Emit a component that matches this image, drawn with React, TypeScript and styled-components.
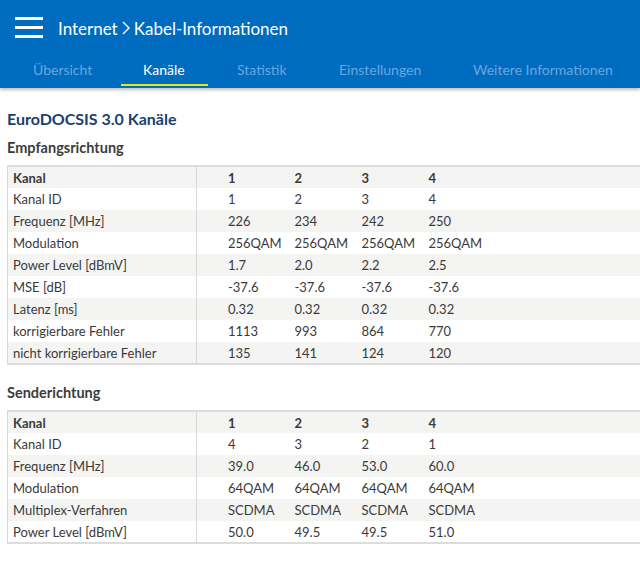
import React from "react";
import styled, { createGlobalStyle } from "styled-components";

const GlobalStyle = createGlobalStyle`
  html, body {
    margin: 0;
    padding: 0;
    background: #ffffff;
    overflow-x: hidden;
  }
  body {
    font-family: Lato, "Noto Sans", sans-serif;
    color: #333333;
  }
`;

const Header = styled.header`
  background-color: #006cc0;
  box-shadow: 0 2px 3px rgba(0, 0, 0, 0.25);
`;

const TopBar = styled.div`
  height: 56px;
  display: flex;
  align-items: center;
  padding-left: 15px;
  gap: 15px;
`;

const Burger = styled.div`
  width: 28px;
  display: flex;
  flex-direction: column;
  gap: 6px;
  margin-top: -2px;

  span {
    display: block;
    height: 3px;
    background: #ffffff;
  }
`;

const Title = styled.h1`
  margin: 0;
  font-size: 17px;
  font-weight: 400;
  color: #ffffff;
  display: flex;
  align-items: center;
  gap: 3px;
`;

const Tabs = styled.nav`
  height: 32px;
  display: flex;
  padding-left: 33px;
`;

const Tab = styled.div<{ $active?: boolean; $width: number }>`
  width: ${(p) => p.$width}px;
  font-size: 14px;
  color: ${(p) => (p.$active ? "#ffffff" : "#6aa6df")};
  line-height: 28px;
  position: relative;

  &::after {
    content: "";
    display: ${(p) => (p.$active ? "block" : "none")};
    position: absolute;
    left: -22px;
    width: 87px;
    bottom: 2px;
    height: 2px;
    background: #e6e61a;
  }
`;

const Main = styled.main`
  padding: 21px 0 30px 7px;
`;

const PageTitle = styled.h2`
  margin: 0 0 11px 0;
  font-size: 16px;
  font-weight: 700;
  color: #1b3f6e;
`;

const SectionTitle = styled.h3<{ $top?: number }>`
  margin: ${(p) => p.$top ?? 0}px 0 9px 0;
  font-size: 14.5px;
  font-weight: 700;
  color: #3c3c3c;
`;

const Table = styled.table`
  border-collapse: collapse;
  table-layout: fixed;
  width: 660px;
  border-top: 2px solid #dcdcdc;
  border-bottom: 2px solid #dcdcdc;
  border-left: 1px solid #d8d8d8;
  font-size: 13px;
  color: #3a3a3a;
`;

const Col = styled.col<{ $width?: number }>`
  width: ${(p) => (p.$width ? `${p.$width}px` : "auto")};
`;

const Row = styled.tr<{ $shade: boolean; $head?: boolean }>`
  background: ${(p) => (p.$shade ? "#f4f4f3" : "#ffffff")};
  font-weight: ${(p) => (p.$head ? 700 : 400)};
  height: 22px;
`;

const LabelCell = styled.td`
  padding: 0 0 0 5px;
  border-right: 1px solid #d8d8d8;
  white-space: nowrap;
`;

const ValueCell = styled.td<{ $first?: boolean }>`
  padding: 0 0 0 ${(p) => (p.$first ? 31 : 0)}px;
  white-space: nowrap;
`;

const FillCell = styled.td``;

type Line = [string, ...string[]];

const downstream: Line[] = [
  ["Kanal", "1", "2", "3", "4"],
  ["Kanal ID", "1", "2", "3", "4"],
  ["Frequenz [MHz]", "226", "234", "242", "250"],
  ["Modulation", "256QAM", "256QAM", "256QAM", "256QAM"],
  ["Power Level [dBmV]", "1.7", "2.0", "2.2", "2.5"],
  ["MSE [dB]", "-37.6", "-37.6", "-37.6", "-37.6"],
  ["Latenz [ms]", "0.32", "0.32", "0.32", "0.32"],
  ["korrigierbare Fehler", "1113", "993", "864", "770"],
  ["nicht korrigierbare Fehler", "135", "141", "124", "120"],
];

const upstream: Line[] = [
  ["Kanal", "1", "2", "3", "4"],
  ["Kanal ID", "4", "3", "2", "1"],
  ["Frequenz [MHz]", "39.0", "46.0", "53.0", "60.0"],
  ["Modulation", "64QAM", "64QAM", "64QAM", "64QAM"],
  ["Multiplex-Verfahren", "SCDMA", "SCDMA", "SCDMA", "SCDMA"],
  ["Power Level [dBmV]", "50.0", "49.5", "49.5", "51.0"],
];

const ChannelTable = ({ rows }: { rows: Line[] }) => (
  <Table>
    <colgroup>
      <Col $width={189} />
      <Col $width={98} />
      <Col $width={67} />
      <Col $width={67} />
      <Col $width={67} />
      <Col />
    </colgroup>
    <tbody>
      {rows.map(([label, ...values], i) => (
        <Row key={label} $shade={i % 2 === 0} $head={i === 0}>
          <LabelCell>{label}</LabelCell>
          {values.map((v, j) => (
            <ValueCell key={j} $first={j === 0}>
              {v}
            </ValueCell>
          ))}
          <FillCell />
        </Row>
      ))}
    </tbody>
  </Table>
);

const tabs = [
  { label: "Übersicht", width: 110 },
  { label: "Kanäle", width: 94 },
  { label: "Statistik", width: 102 },
  { label: "Einstellungen", width: 134 },
  { label: "Weitere Informationen", width: 160 },
];

const App = () => (
  <>
    <GlobalStyle />
    <Header>
      <TopBar>
        <Burger>
          <span />
          <span />
          <span />
        </Burger>
        <Title>
          Internet
          <svg width="10" height="16" viewBox="0 0 10 16">
            <path d="M2 2 L8 8 L2 14" fill="none" stroke="#fff" strokeWidth="1.4" />
          </svg>
          Kabel-Informationen
        </Title>
      </TopBar>
      <Tabs>
        {tabs.map((t) => (
          <Tab key={t.label} $width={t.width} $active={t.label === "Kanäle"}>
            {t.label}
          </Tab>
        ))}
      </Tabs>
    </Header>
    <Main>
      <PageTitle>EuroDOCSIS 3.0 Kanäle</PageTitle>
      <SectionTitle>Empfangsrichtung</SectionTitle>
      <ChannelTable rows={downstream} />
      <SectionTitle $top={19}>Senderichtung</SectionTitle>
      <ChannelTable rows={upstream} />
    </Main>
  </>
);

export default App;
